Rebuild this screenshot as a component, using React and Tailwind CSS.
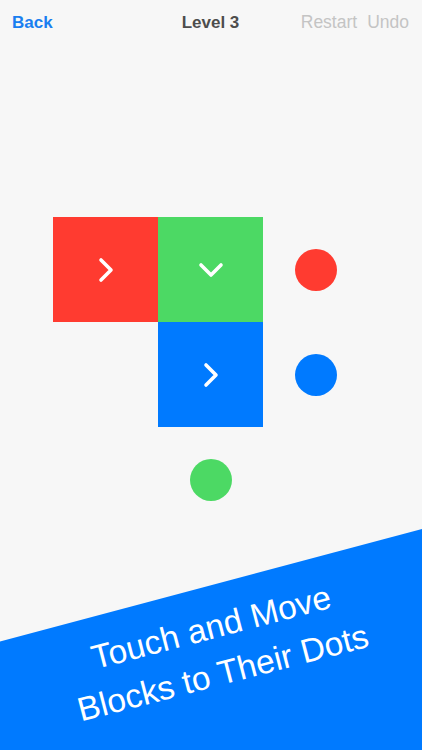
import React from 'react'

const font = { fontFamily: '"Liberation Sans", Arial, sans-serif' }

function Chevron({ dir = 'right' }) {
  if (dir === 'down') {
    return (
      <svg width="26" height="16" viewBox="0 0 26 16" fill="none">
        <path d="M3 3l10 10 10-10" stroke="white" strokeWidth="3.6" strokeLinecap="round" strokeLinejoin="round" />
      </svg>
    )
  }
  return (
    <svg width="16" height="26" viewBox="0 0 16 26" fill="none">
      <path d="M3 3l10 10-10 10" stroke="white" strokeWidth="3.6" strokeLinecap="round" strokeLinejoin="round" />
    </svg>
  )
}

function Block({ color, dir }) {
  return (
    <div className={`w-full h-full flex items-center justify-center ${color}`}>
      <Chevron dir={dir} />
    </div>
  )
}

function Dot({ color }) {
  return (
    <div className="w-full h-full flex items-center justify-center">
      <div className={`w-[42px] h-[42px] rounded-full ${color}`} />
    </div>
  )
}

export default function App() {
  return (
    <div className="relative w-full h-[750px] overflow-hidden bg-[#f7f7f7]" style={font}>

      {/* HEADER */}
      <header className="grid grid-cols-[1fr_auto_1fr] items-center h-[45px] pl-[12px] pr-[13px]">
        <button className="justify-self-start text-[17px] font-bold text-[#1a7ff0]">
          Back
        </button>
        <h1 className="text-[17px] font-bold text-[#4d4d4d]">Level 3</h1>
        <div className="justify-self-end flex items-center gap-[10px] text-[17.5px] text-[#c4c4c4]">
          <button>Restart</button>
          <button>Undo</button>
        </div>
      </header>

      {/* BOARD */}
      <div className="mt-[172px] ml-[53px] w-[315px] grid grid-cols-[105px_105px_105px] grid-rows-[105px_105px_105px]">
        <Block color="bg-[#ff3b30]" dir="right" />
        <Block color="bg-[#4cd964]" dir="down" />
        <Dot color="bg-[#ff3b30]" />

        <div />
        <Block color="bg-[#007aff]" dir="right" />
        <Dot color="bg-[#007aff]" />

        <div />
        <Dot color="bg-[#4cd964]" />
        <div />
      </div>

      {/* BANNER */}
      <div className="absolute left-[-200px] top-[695px] w-[800px] h-[400px] bg-[#007aff] origin-top-left -rotate-[14.95deg]" />
      <div className="absolute left-[217px] top-[650px] -translate-x-1/2 -translate-y-1/2 -rotate-[14.6deg] whitespace-nowrap text-center text-white text-[33.5px] leading-[47px]">
        <p>Touch and Move</p>
        <p>Blocks to Their Dots</p>
      </div>
    </div>
  )
}
